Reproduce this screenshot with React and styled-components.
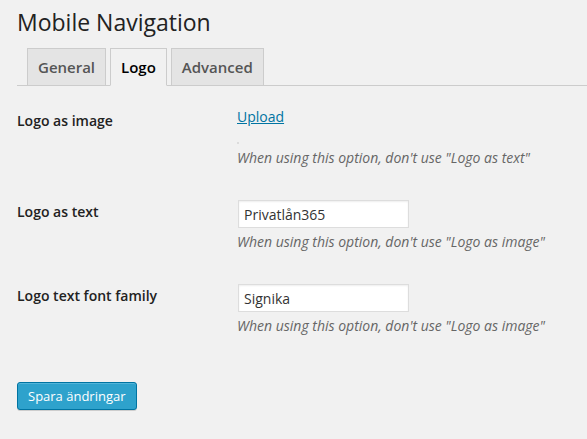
import React, { useState } from 'react'
import styled, { createGlobalStyle } from 'styled-components'

const GlobalStyle = createGlobalStyle`
  html, body {
    margin: 0;
    padding: 0;
    background: #f1f1f1;
  }
  body {
    font-family: "Open Sans", "Liberation Sans", sans-serif;
    color: #222;
    font-size: 13px;
  }
`

const tabs = ['General', 'Logo', 'Advanced']

function App() {
  const [activeTab, setActiveTab] = useState('Logo')
  const [logoText, setLogoText] = useState('Privatlån365')
  const [fontFamily, setFontFamily] = useState('Signika')

  return (
    <Wrap>
      <GlobalStyle />
      <Title>Mobile Navigation</Title>
      <TabBar>
        {tabs.map(tab => (
          <Tab key={tab} href="#" active={tab === activeTab ? 1 : 0} onClick={() => setActiveTab(tab)}>
            {tab}
          </Tab>
        ))}
      </TabBar>
      <FormTable>
        <Row>
          <Label>Logo as image</Label>
          <Field top={12}>
            <UploadLink href="#">Upload</UploadLink>
            <Preview><PreviewDot /></Preview>
            <Description>When using this option, don't use "Logo as text"</Description>
          </Field>
        </Row>
        <Row>
          <Label>Logo as text</Label>
          <Field top={15}>
            <TextInput type="text" value={logoText} onChange={e => setLogoText(e.target.value)} />
            <Description>When using this option, don't use "Logo as image"</Description>
          </Field>
        </Row>
        <Row>
          <Label>Logo text font family</Label>
          <Field top={15}>
            <TextInput type="text" value={fontFamily} onChange={e => setFontFamily(e.target.value)} />
            <Description>When using this option, don't use "Logo as image"</Description>
          </Field>
        </Row>
      </FormTable>
      <SubmitButton type="button">Spara ändringar</SubmitButton>
    </Wrap>
  )
}

export default App

const Wrap = styled.div`
  padding: 0 0 40px 17px;
`
const Title = styled.h2`
  margin: 0;
  padding: 8px 0 0 0;
  font-size: 23px;
  font-weight: 400;
  line-height: 29px;
  color: #222;
`
const TabBar = styled.div`
  display: flex;
  align-items: flex-end;
  gap: 4px;
  margin-top: 11px;
  padding-left: 10px;
  border-bottom: 1px solid #ccc;
`
const Tab = styled.a`
  display: block;
  margin-bottom: -1px;
  padding: 6px 10px;
  border: 1px solid #ccc;
  border-bottom: 1px solid ${props => props.active ? '#f1f1f1' : '#ccc'};
  background: ${props => props.active ? '#f1f1f1' : '#e4e4e4'};
  color: ${props => props.active ? '#000' : '#555'};
  font-size: 15px;
  font-weight: 600;
  line-height: 24px;
  text-decoration: none;
`
const FormTable = styled.div`
  margin-top: 8px;
`
const Row = styled.div`
  display: flex;
  align-items: flex-start;
`
const Label = styled.div`
  flex: 0 0 220px;
  padding-top: 18px;
  font-size: 14px;
  font-weight: 600;
  line-height: 18px;
  color: #222;
`
const Field = styled.div`
  display: flex;
  flex-direction: column;
  align-items: flex-start;
  padding: ${props => props.top}px 0 17px 0;
`
const UploadLink = styled.a`
  font-size: 14px;
  line-height: 21px;
  color: #0074a2;
  text-decoration: underline;
`
const Preview = styled.div`
  margin-top: 15px;
  height: 2px;
`
const PreviewDot = styled.span`
  display: block;
  width: 2px;
  height: 2px;
  background: #dcdcdc;
`
const Description = styled.p`
  margin: 4px 0 0 0;
  font-size: 14px;
  font-style: italic;
  line-height: 20px;
  color: #666;
`
const TextInput = styled.input`
  box-sizing: border-box;
  width: 171px;
  height: 28px;
  margin: 0 0 0 1px;
  padding: 0 5px;
  border: 1px solid #ddd;
  background: #fff;
  box-shadow: inset 0 1px 2px rgba(0, 0, 0, .07);
  font-family: "Open Sans", "Liberation Sans", sans-serif;
  font-size: 14px;
  color: #333;
  outline: none;
`
const SubmitButton = styled.button`
  display: block;
  box-sizing: border-box;
  height: 28px;
  margin-top: 29px;
  padding: 0 10px 1px;
  border: 1px solid #0074a2;
  border-radius: 3px;
  background: #2ea2cc;
  box-shadow: inset 0 1px 0 rgba(120, 200, 230, .5), 0 1px 0 rgba(0, 0, 0, .15);
  color: #fff;
  font-family: "Open Sans", "Liberation Sans", sans-serif;
  font-size: 13px;
  line-height: 26px;
  cursor: pointer;
`
